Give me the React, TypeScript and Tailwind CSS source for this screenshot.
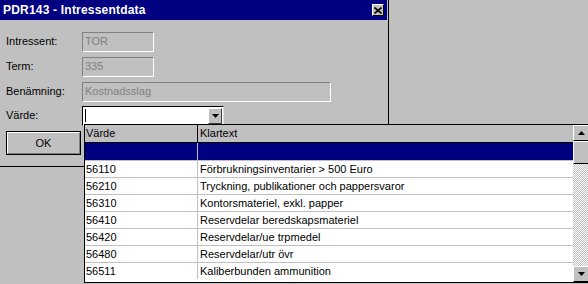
import React from "react";

const rows = [
  { code: "56110", text: "Förbrukningsinventarier > 500 Euro" },
  { code: "56210", text: "Tryckning, publikationer och pappersvaror" },
  { code: "56310", text: "Kontorsmateriel, exkl. papper" },
  { code: "56410", text: "Reservdelar beredskapsmateriel" },
  { code: "56420", text: "Reservdelar/ue trpmedel" },
  { code: "56480", text: "Reservdelar/utr övr" },
  { code: "56511", text: "Kaliberbunden ammunition" },
];

const font = { fontFamily: '"Liberation Sans", Arial, sans-serif' };

const Arrow = ({ up }: { up?: boolean }) => (
  <svg width="7" height="4" viewBox="0 0 7 4">
    <path d={up ? "M3.5 0 L7 4 L0 4 Z" : "M0 0 L7 0 L3.5 4 Z"} fill="#000" />
  </svg>
);

const Field = ({
  label,
  value,
  width,
}: {
  label: string;
  value: string;
  width: string;
}) => (
  <div className="flex items-center h-[25px]">
    <span className="w-[76px] text-[11px] text-black">{label}</span>
    <div
      className={`${width} h-[20px] bg-[#c0c0c0] border border-t-[#808080] border-l-[#808080] border-b-white border-r-white flex items-center px-[2px] text-[11px] text-[#808080]`}
    >
      {value}
    </div>
  </div>
);

const App = () => {
  return (
    <div
      className="relative w-[588px] h-[284px] bg-[#c0c0c0] overflow-hidden"
      style={font}
    >
      {/* dialog */}
      <div className="w-[389px] h-[167px] border-r border-b border-black bg-[#c0c0c0]">
        <div className="h-[20px] bg-[#000080] flex items-center justify-between pl-[3px] pr-[3px] mr-[1px]">
          <span className="text-white font-bold text-[12px] tracking-[0.2px]">
            PDR143 - Intressentdata
          </span>
          <div className="w-[12px] h-[12px] bg-[#c0c0c0] border border-t-white border-l-white border-b-black border-r-black flex items-center justify-center">
            <svg width="8" height="7" viewBox="0 0 8 7">
              <path d="M0.5 0.5 L7.5 6.5 M7.5 0.5 L0.5 6.5" stroke="#000" strokeWidth="1.6" />
            </svg>
          </div>
        </div>

        <div className="pl-[6px] pt-[9px]">
          <Field label="Intressent:" value="TOR" width="w-[72px]" />
          <Field label="Term:" value="335" width="w-[72px]" />
          <Field label="Benämning:" value="Kostnadsslag" width="w-[249px]" />
          <div className="flex items-center h-[25px] -mt-[1px]">
            <span className="w-[76px] text-[11px] text-black">Värde:</span>
            <div className="w-[142px] h-[20px] bg-white border border-t-black border-l-black border-b-[#dfdfdf] border-r-[#dfdfdf] flex items-center justify-between pl-[2px] pr-[1px]">
              <div className="w-[1px] h-[13px] bg-black" />
              <div className="w-[14px] h-[16px] bg-[#c0c0c0] border border-t-white border-l-white border-b-[#404040] border-r-[#404040] flex items-center justify-center">
                <Arrow />
              </div>
            </div>
          </div>

          <div className="mt-[3px] w-[75px] h-[24px] border border-black">
            <div className="w-full h-full border border-t-white border-l-white border-b-[#808080] border-r-[#808080] flex items-center justify-center text-[11px] text-black">
              OK
            </div>
          </div>
        </div>
      </div>

      {/* dropdown list */}
      <div className="absolute left-[84px] top-[124px] w-[506px] h-[159px] bg-white border border-black flex">
        <div className="flex-1 flex flex-col">
          <div className="h-[18px] flex bg-[#c0c0c0] border-b border-black text-[11px] text-black">
            <div className="w-[113px] pl-[1px] flex items-center border-r border-black">Värde</div>
            <div className="flex-1 pl-[2px] flex items-center">Klartext</div>
          </div>
          <div className="h-[17px] flex bg-[#000080]">
            <div className="w-[113px] border-r border-[#c0c0c0]" />
            <div className="flex-1" />
          </div>
          {rows.map((r) => (
            <div
              key={r.code}
              className="h-[17px] flex border-t border-[#c0c0c0] text-[11px] text-black"
            >
              <div className="w-[113px] pl-[1px] flex items-center border-r border-[#c0c0c0]">
                {r.code}
              </div>
              <div className="flex-1 pl-[2px] flex items-center whitespace-nowrap overflow-hidden">
                {r.text}
              </div>
            </div>
          ))}
        </div>

        {/* scrollbar */}
        <div className="w-[16px] flex flex-col bg-[repeating-conic-gradient(#c0c0c0_0_25%,#ffffff_0_50%)] bg-[length:2px_2px]">
          <div className="h-[16px] bg-[#c0c0c0] border border-t-white border-l-white border-b-black border-r-black flex items-center justify-center">
            <Arrow up />
          </div>
          <div className="h-[23px] bg-[#c0c0c0] border border-t-white border-l-white border-b-black border-r-black" />
          <div className="flex-1" />
          <div className="h-[16px] bg-[#c0c0c0] border border-t-white border-l-white border-b-black border-r-black flex items-center justify-center">
            <Arrow />
          </div>
        </div>
      </div>
    </div>
  );
};

export default App;
